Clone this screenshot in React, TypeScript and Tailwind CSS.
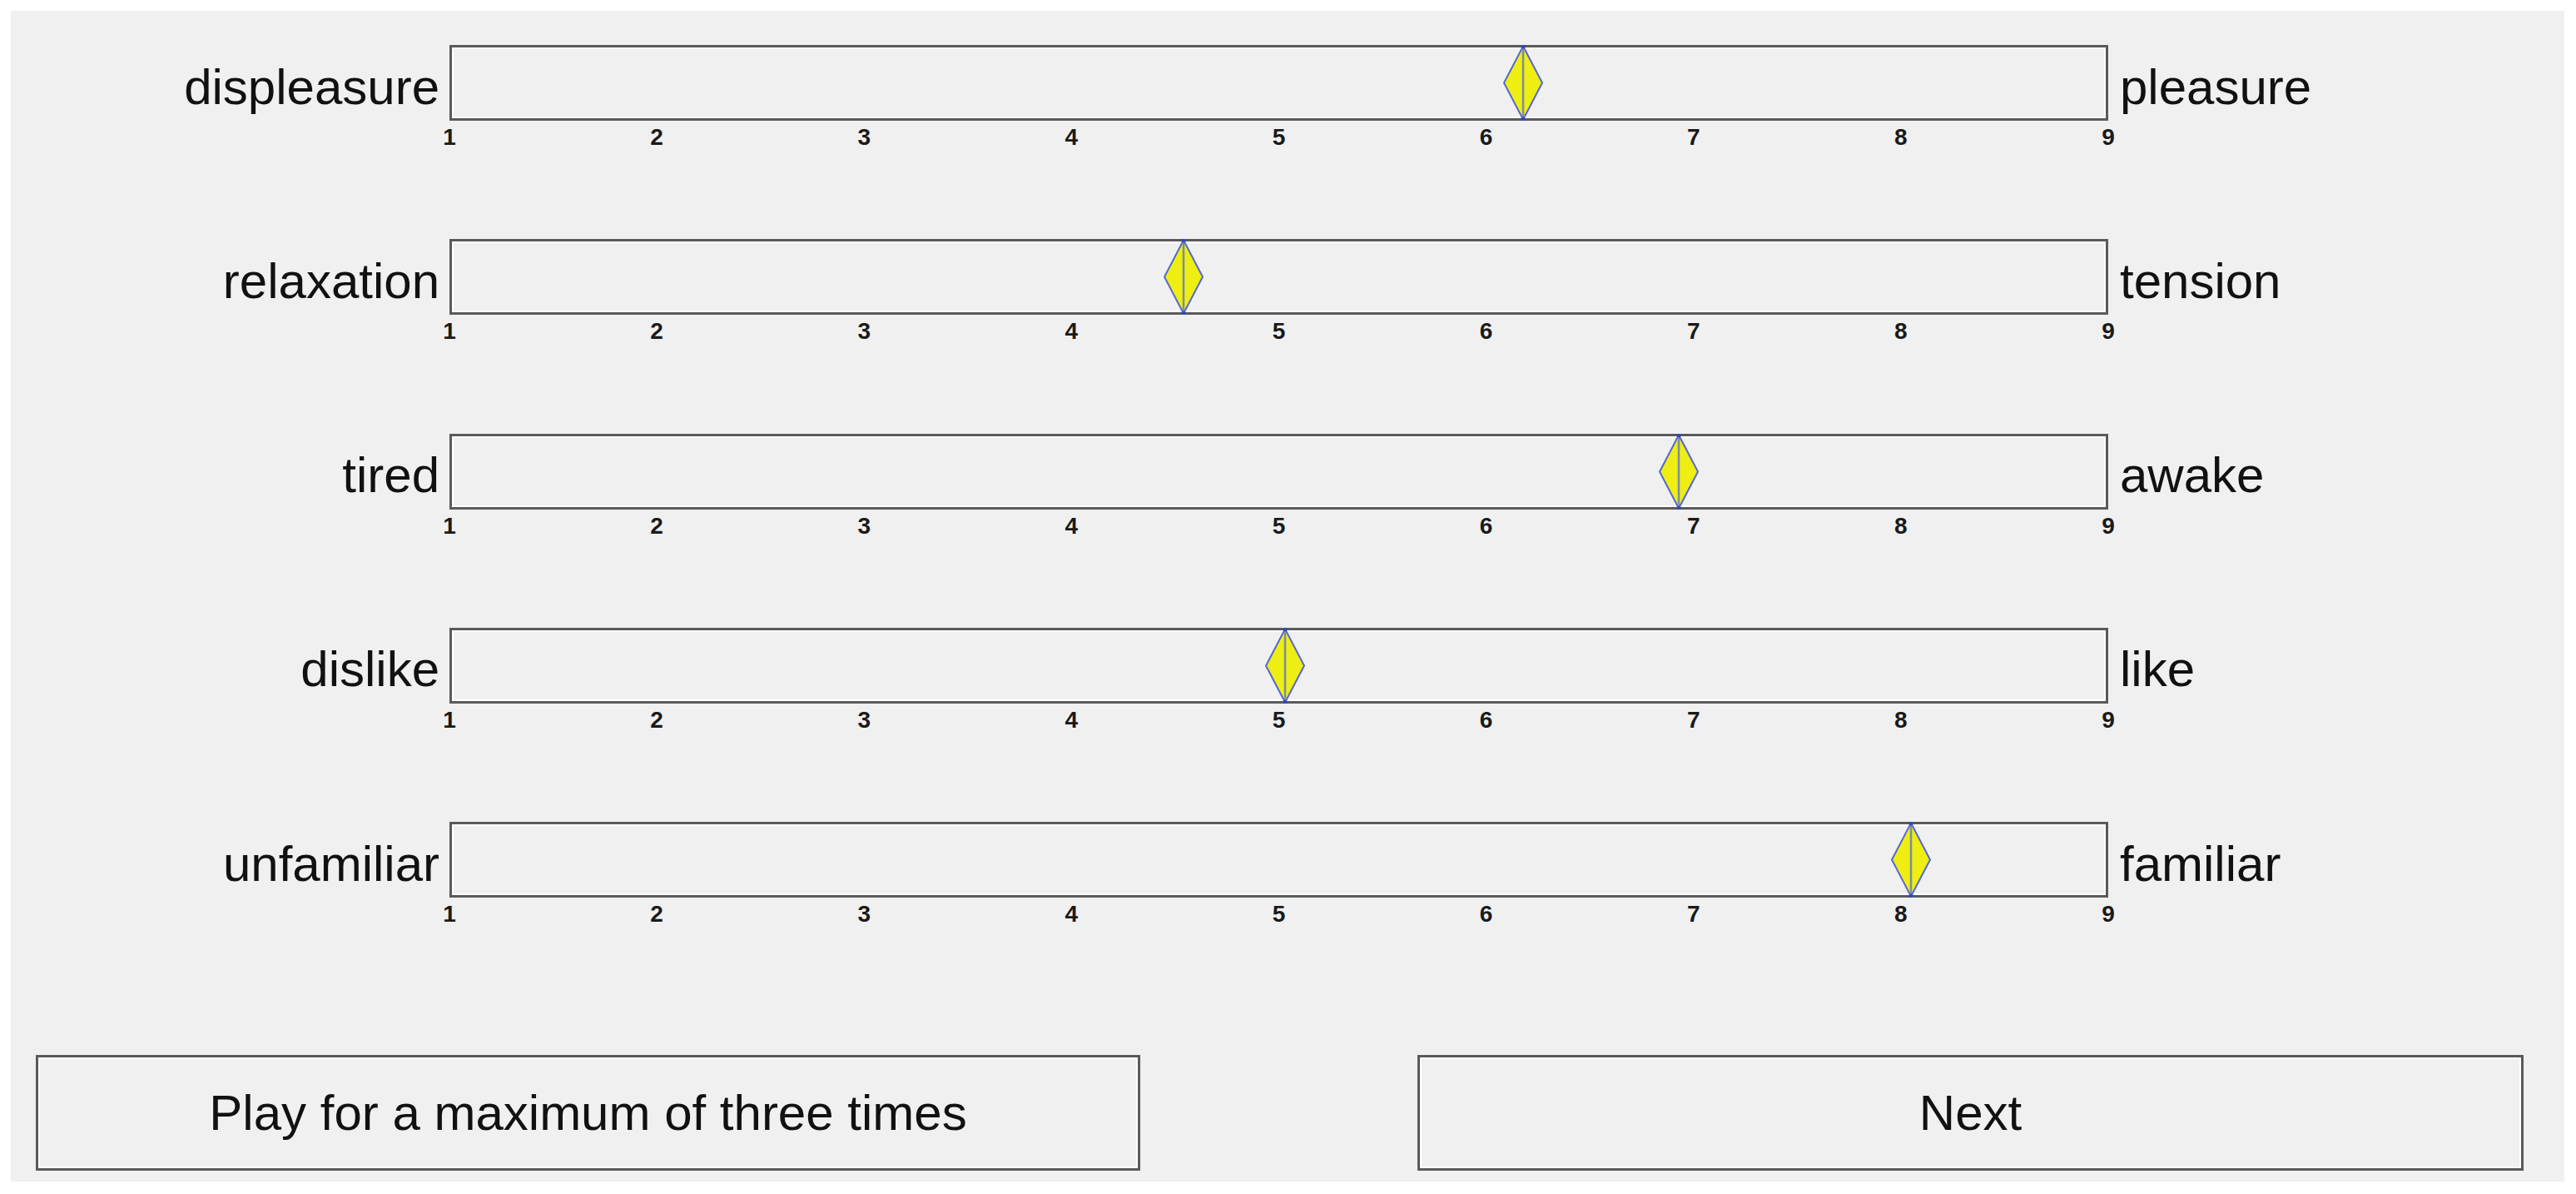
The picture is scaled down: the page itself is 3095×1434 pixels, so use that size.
import React from "react";

const scales = [
  { left: "displeasure", right: "pleasure", value: 6.18 },
  { left: "relaxation", right: "tension", value: 4.54 },
  { left: "tired", right: "awake", value: 6.93 },
  { left: "dislike", right: "like", value: 5.03 },
  { left: "unfamiliar", right: "familiar", value: 8.05 },
];

const ticks = [1, 2, 3, 4, 5, 6, 7, 8, 9];

function Marker() {
  return (
    <svg width="49" height="91" viewBox="0 0 49 91" className="block h-full">
      <polygon points="24.5,1.5 47.5,45.5 24.5,89.5 1.5,45.5" fill="#eeee12" stroke="#5468d2" strokeWidth="2" />
      <line x1="24.5" y1="2" x2="24.5" y2="89" stroke="#7d8ca6" strokeWidth="2.5" />
      <circle cx="24.5" cy="2" r="2.5" fill="#3448b8" />
      <circle cx="24.5" cy="89" r="2.5" fill="#3448b8" />
    </svg>
  );
}

function ScaleRow({ left, right, value }: { left: string; right: string; value: number }) {
  const pct = ((value - 1) / 8) * 100;
  return (
    <div className="flex h-[233.25px] flex-col">
      <div className="flex h-[91px] items-center">
        <div className="w-[527px] pr-[12px] pt-[10px] text-right text-[60px] leading-none">{left}</div>
        <div className="relative h-full w-[1993px]">
          <div className="h-full w-full border-[3px] border-[#5a5a5a] shadow-[inset_0_0_0_2px_#ffffff]" />
          <div className="absolute top-0 bottom-0 -translate-x-1/2" style={{ left: `${pct}%` }}>
            <Marker />
          </div>
        </div>
        <div className="pl-[14px] pt-[10px] text-[60px] leading-none">{right}</div>
      </div>
      <div className="ml-[507px] flex w-[2033px] justify-between pt-[6px]">
        {ticks.map((t) => (
          <span key={t} className="w-[40px] text-center text-[28px] font-semibold leading-none text-[#1a1a1a]">
            {t}
          </span>
        ))}
      </div>
    </div>
  );
}

export default function App() {
  return (
    <div className="h-[1434px] w-[3095px] bg-white pt-[13px] pr-[14px] pb-[15px] pl-[13px] font-['Liberation_Sans',Arial,sans-serif] text-[#111]">
      <div className="flex h-full flex-col bg-[#f0f0f0]">
        <div className="pt-[41px]">
          {scales.map((s) => (
            <ScaleRow key={s.left} {...s} />
          ))}
        </div>

        {/* Buttons */}
        <div className="mt-auto flex justify-between pb-[13px] pl-[30px] pr-[49px]">
          <button className="flex h-[139px] w-[1327px] items-center justify-center border-[3px] border-[#5a5a5a] bg-[#f0f0f0] text-[60px] leading-none shadow-[inset_0_0_0_2px_#ffffff]">
            Play for a maximum of three times
          </button>
          <button className="flex h-[139px] w-[1329px] items-center justify-center border-[3px] border-[#5a5a5a] bg-[#f0f0f0] text-[60px] leading-none shadow-[inset_0_0_0_2px_#ffffff]">
            Next
          </button>
        </div>
      </div>
    </div>
  );
}
